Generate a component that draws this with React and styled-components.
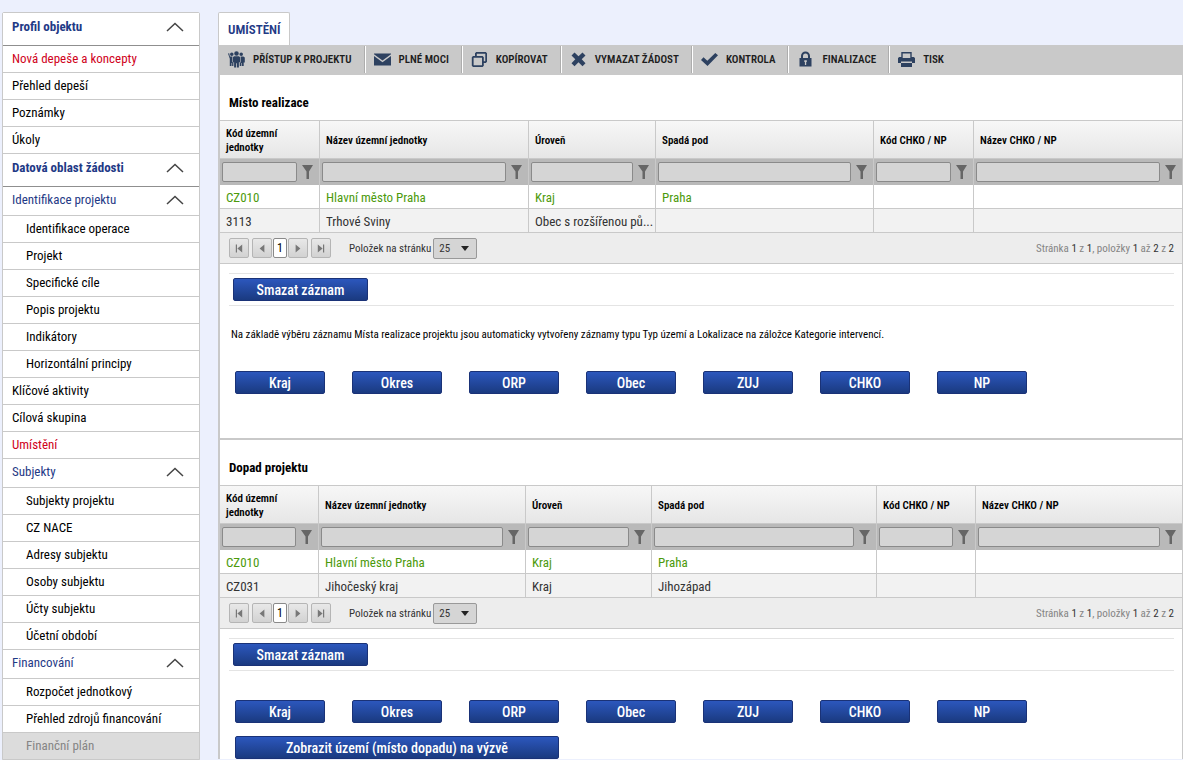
import React from 'react';
import styled, {createGlobalStyle, css} from 'styled-components';

const GlobalStyle = createGlobalStyle`
  * {
    box-sizing: border-box;
  }

  body {
    margin: 0;
    background: #ecf0fd;
    color: #000;
    font-family: 'Roboto Condensed', 'Liberation Sans Narrow', Roboto, sans-serif;
    font-size: 13px;
  }

  button, input, select {
    font-family: inherit;
  }
`;

const Page = styled.div`
  display: flex;
  align-items: flex-start;
  gap: 18px;
  padding: 12px 0 0 2px;
`;

const Sidebar = styled.nav`
  flex: 0 0 198px;
  border: 1px solid #c9c9c9;
  border-radius: 2px;
  background: #fff;
`;

const MenuHeading = styled.button`
  display: flex;
  align-items: center;
  justify-content: space-between;
  width: 100%;
  height: ${({$main}) => $main ? '33px' : '29px'};
  padding: ${({$main}) => $main ? '0 15px 5px 9px' : '0 15px 3px 9px'};
  border: 0;
  border-bottom: 1px solid ${({$main}) => $main ? '#8f8f8f' : '#c9c9c9'};
  background: #fff;
  color: #1f3a86;
  font-size: 13px;
  font-weight: ${({$main}) => $main ? 700 : 400};
  text-align: left;
  cursor: pointer;
`;

const MenuLink = styled.a`
  display: block;
  height: 27px;
  padding-left: ${({$nested}) => $nested ? '23px' : '9px'};
  border-bottom: 1px solid #c9c9c9;
  color: ${({$active}) => $active ? '#d0021b' : '#000'};
  line-height: 26px;
  text-decoration: none;

  ${({$disabled}) => $disabled && css`
    background: #dcdcdc;
    color: #858585;
  `}
`;

const Main = styled.main`
  flex: 1 1 auto;
  min-width: 0;
`;

const Tab = styled.a`
  display: inline-block;
  height: 33px;
  padding: 0 9px;
  border: 1px solid #c9c9c9;
  border-bottom: 0;
  border-radius: 2px 2px 0 0;
  background: #fff;
  color: #1f3a86;
  font-weight: 600;
  line-height: 34px;
  text-decoration: none;
  vertical-align: top;
`;

const Panel = styled.div`
  border: solid #c9c9c9;
  border-width: 0 1px 0 2px;
  background: #fff;
`;

const Toolbar = styled.div`
  display: flex;
  height: 30px;
  padding: 1px 0 2px;
  background: #c9c9c9;
`;

const ToolButton = styled.button`
  display: flex;
  align-items: center;
  gap: 8px;
  padding: 0 13px 0 8px;
  border: 0;
  background: none;
  color: #1d1d1d;
  font-size: 11px;
  font-weight: 600;
  text-transform: uppercase;
  white-space: nowrap;
  cursor: pointer;

  & + & {
    border-left: 1px solid #fff;
    box-shadow: -1px 0 0 #adadad;
  }

  svg {
    width: 17px;
    height: 17px;
    fill: #2d4160;
  }
`;

const Section = styled.section`
  & + & {
    border-top: 2px solid #c9c9c9;
  }
`;

const SectionTitle = styled.h2`
  height: 45px;
  margin: 0;
  padding: 10px 0 0 9px;
  font-size: 13px;
  font-weight: 700;
  line-height: 36px;
`;

const Grid = styled.table`
  width: 100%;
  border-top: 1px solid #c9c9c9;
  border-spacing: 0;
  table-layout: fixed;
`;

const HeadCell = styled.th`
  height: 38px;
  padding: 2px 40px 0 6px;
  border-right: 1px solid #c9c9c9;
  border-bottom: 1px solid #c9c9c9;
  background: linear-gradient(#f7f7f7, #e6e6e6);
  font-size: 11px;
  font-weight: 600;
  line-height: 14px;
  text-align: left;
  white-space: ${({$wrap}) => $wrap ? 'normal' : 'nowrap'};

  &:last-child {
    border-right: 0;
  }
`;

const FilterCell = styled.td`
  height: 26px;
  padding: 0 6px 0 2px;
  border-right: 1px solid #c9c9c9;
  background: #b9b9b9;

  &:last-child {
    border-right: 0;
  }
`;

const FilterBox = styled.div`
  display: flex;
  align-items: center;
  gap: 5px;
`;

const FilterInput = styled.input`
  flex: 1 1 auto;
  width: 0;
  height: 20px;
  padding: 0 4px;
  border: 1px solid #8a8a8a;
  border-radius: 2px;
  background: #d5d5d5;
`;

const FilterButton = styled.button`
  display: flex;
  padding: 0;
  border: 0;
  background: none;

  svg {
    width: 11px;
    height: 14px;
    fill: #666;
  }
`;

const Cell = styled.td`
  height: 24px;
  padding: 2px 0 0 6px;
  border-right: 1px solid #c9c9c9;
  border-bottom: 1px solid #c9c9c9;
  background: ${({$alt}) => $alt ? '#f2f2f2' : '#fff'};
  color: ${({$selected}) => $selected ? '#4c9a0c' : '#333'};
  white-space: nowrap;

  &:last-child {
    border-right: 0;
  }
`;

const Pager = styled.div`
  display: flex;
  align-items: center;
  height: 31px;
  padding: 0 8px 0 9px;
  border-bottom: 1px solid #c9c9c9;
  background: #ededed;
  color: #333;
  font-size: 11px;
`;

const PagerGroup = styled.div`
  display: flex;
  gap: 3px;
`;

const PagerButton = styled.button`
  display: flex;
  align-items: center;
  justify-content: center;
  width: 20px;
  height: 20px;
  padding: 0;
  border: 1px solid #b5b5b5;
  border-radius: 2px;
  background: linear-gradient(#e8e8e8, #d2d2d2);

  svg {
    width: 8px;
    height: 9px;
    fill: #777;
  }
`;

const PageNumber = styled.button`
  width: 14px;
  height: 20px;
  margin: 0 1px;
  padding: 0;
  border: 1px solid #8a8a8a;
  border-radius: 2px;
  background: #fff;
  font-size: 12px;
`;

const SizeLabel = styled.label`
  display: flex;
  align-items: center;
  gap: 2px;
  margin-left: 18px;
`;

const SizeBox = styled.span`
  position: relative;
  display: block;

  svg {
    position: absolute;
    top: 8px;
    right: 8px;
    width: 8px;
    height: 5px;
    fill: #222;
    pointer-events: none;
  }
`;

const SizeSelect = styled.select`
  display: block;
  width: 44px;
  height: 21px;
  padding: 0 5px;
  border: 1px solid #999;
  border-radius: 2px;
  background: #d5d5d5;
  color: #333;
  font-size: 11px;
  appearance: none;
`;

const PagerInfo = styled.span`
  margin-left: auto;
  color: #858585;

  b {
    color: #333;
    font-weight: 400;
  }
`;

const DeleteBar = styled.div`
  margin: 9px 8px 0 9px;
  padding: 4px;
  border: solid #e4e4e4;
  border-width: 1px 0;
`;

const Note = styled.p`
  margin: 0;
  padding: 20px 11px 0;
  font-size: 11px;
  line-height: 18px;
`;

const Buttons = styled.div`
  display: flex;
  flex-wrap: wrap;
  gap: 13px 27px;
  padding: ${({$tall}) => $tall ? '27px 15px 44px' : '29px 15px 0'};
`;

const Button = styled.button`
  display: block;
  width: ${({$width}) => $width || 90}px;
  height: 23px;
  padding: 0;
  border: 1px solid #1a3277;
  border-radius: 2px;
  background: linear-gradient(#2c57bd, #1a3a80);
  color: #fff;
  font-size: 14px;
  font-weight: 500;
  line-height: 20px;
  cursor: pointer;
`;

const Chevron = () => (
  <svg width="18" height="10" viewBox="0 0 18 10" fill="none" stroke="#444" strokeWidth="1.5">
    <path d="M1 9 9 1.5 17 9"/>
  </svg>
);

const icons = {
  people: <path d="M8.500 .2a2.300 2.300 0 0 1 0 4.600 2.300 2.300 0 0 1 0-4.600zM3.800 1.400a1.800 1.800 0 0 1 0 3.600 1.800 1.800 0 0 1 0-3.600zM13.200 1.400a1.800 1.800 0 0 1 0 3.600 1.800 1.800 0 0 1 0-3.600zM6 5.200h5l1 1v5h-1.100v5.300H8.900v-4.300h-.8v4.300H6.100v-5.300H5V6.200zM0 2.400l1.200-.2.700 3.200h2.500v5.800h1V15H4.100v-3h-.6v3H1.800V7.800zM12.600 5.400h2.800l1.400 1.200v4.900h-1.100V15H14v-3h-.6v3h-1.700v-3.400h.9z"/>,
  mail: <path d="M0 2.500h17v.7L8.500 9.500 0 3.200zM0 5l8.500 6.200L17 5v9.500H0z"/>,
  copy: <path fillRule="evenodd" d="M5.200 1h9.600l1.200 1.200v8.600L14.800 12h-2v2.800L11.600 16H2L.8 14.800V6.200L2 5h2V2.200zM5.800 2.700V5h5.800l1.200 1.200v4.100h1.500V2.700zM2.600 6.800v7.500H11V6.800z"/>,
  cross: <path d="m1.500 4.500 3-3 4 3.800 4-3.800 3 3-3.800 3.800 3.800 3.900-3 3-4-3.900-4 3.900-3-3 3.800-3.900z"/>,
  check: <path d="m0 9 2.500-2.700 3.800 3.500 8-7.800L17 4.300 6.500 15z"/>,
  lock: <path fillRule="evenodd" d="M4 7V5a4.500 4.500 0 0 1 9 0v2h1.500v8.500h-12V7zM6 7h5V5a2.500 2.500 0 0 0-5 0zM7.300 9.300v1.800h.6V14h1.300v-2.900h.6V9.300z"/>,
  print: <path fillRule="evenodd" d="M3.300 1h10.400v5h2l1.300 1v5h-3v4H3v-4H0V7l1.300-1h2zM4.700 2.400V7h7.600V2.400zM3 10.500V12h11v-1.500z"/>,
};

const menu = [
  {title: 'Profil objektu', main: true},
  {text: 'Nová depeše a koncepty', active: true},
  {text: 'Přehled depeší'},
  {text: 'Poznámky'},
  {text: 'Úkoly'},
  {title: 'Datová oblast žádosti', main: true},
  {title: 'Identifikace projektu'},
  {text: 'Identifikace operace', nested: true},
  {text: 'Projekt', nested: true},
  {text: 'Specifické cíle', nested: true},
  {text: 'Popis projektu', nested: true},
  {text: 'Indikátory', nested: true},
  {text: 'Horizontální principy', nested: true},
  {text: 'Klíčové aktivity'},
  {text: 'Cílová skupina'},
  {text: 'Umístění', active: true},
  {title: 'Subjekty'},
  {text: 'Subjekty projektu', nested: true},
  {text: 'CZ NACE', nested: true},
  {text: 'Adresy subjektu', nested: true},
  {text: 'Osoby subjektu', nested: true},
  {text: 'Účty subjektu', nested: true},
  {text: 'Účetní období', nested: true},
  {title: 'Financování'},
  {text: 'Rozpočet jednotkový', nested: true},
  {text: 'Přehled zdrojů financování', nested: true},
  {text: 'Finanční plán', nested: true, disabled: true},
];

const tools = [
  {icon: 'people', text: 'Přístup k projektu'},
  {icon: 'mail', text: 'Plné moci'},
  {icon: 'copy', text: 'Kopírovat'},
  {icon: 'cross', text: 'Vymazat žádost'},
  {icon: 'check', text: 'Kontrola'},
  {icon: 'lock', text: 'Finalizace'},
  {icon: 'print', text: 'Tisk'},
];

const columns = ['Kód územní jednotky', 'Název územní jednotky', 'Úroveň', 'Spadá pod', 'Kód CHKO / NP', 'Název CHKO / NP'];
const levels = ['Kraj', 'Okres', 'ORP', 'Obec', 'ZUJ', 'CHKO', 'NP'];

const places = [
  ['CZ010', 'Hlavní město Praha', 'Kraj', 'Praha', '', ''],
  ['3113', 'Trhové Sviny', 'Obec s rozšířenou pů...', '', '', ''],
];

const impacts = [
  ['CZ010', 'Hlavní město Praha', 'Kraj', 'Praha', '', ''],
  ['CZ031', 'Jihočeský kraj', 'Kraj', 'Jihozápad', '', ''],
];

const DataGrid = ({rows, widths, id}) => (
  <>
    <Grid>
      <colgroup>
        {columns.map((name, i) => <col key={name} width={widths[i]}/>)}
      </colgroup>
      <thead>
        <tr>
          {columns.map((name, i) => <HeadCell key={name} $wrap={i === 0}>{name}</HeadCell>)}
        </tr>
      </thead>
      <tbody>
        <tr>
          {columns.map((name) => (
            <FilterCell key={name}>
              <FilterBox>
                <FilterInput type="text" aria-label={name}/>
                <FilterButton aria-label={`Filtr: ${name}`}>
                  <svg viewBox="0 0 11 14"><path d="M0 0h11L7 6.500V14H4.500V6.500z"/></svg>
                </FilterButton>
              </FilterBox>
            </FilterCell>
          ))}
        </tr>
        {rows.map((row, r) => (
          <tr key={row[0]}>
            {row.map((text, i) => <Cell key={columns[i]} $selected={r === 0} $alt={r % 2 === 1}>{text}</Cell>)}
          </tr>
        ))}
      </tbody>
    </Grid>
    <Pager>
      <PagerGroup>
        <PagerButton aria-label="První"><svg viewBox="0 0 10 10"><path d="M1 0h1.500v10H1zM9 0v10L3 5z"/></svg></PagerButton>
        <PagerButton aria-label="Předchozí"><svg viewBox="0 0 10 10"><path d="M8 0v10L2 5z"/></svg></PagerButton>
      </PagerGroup>
      <PageNumber>1</PageNumber>
      <PagerGroup>
        <PagerButton aria-label="Další"><svg viewBox="0 0 10 10"><path d="M2 0v10l6-5z"/></svg></PagerButton>
        <PagerButton aria-label="Poslední"><svg viewBox="0 0 10 10"><path d="M1 0v10l6-5zM7.500 0H9v10H7.500z"/></svg></PagerButton>
      </PagerGroup>
      <SizeLabel htmlFor={id}>
        Položek na stránku
        <SizeBox>
          <SizeSelect id={id} defaultValue="25">
            <option>10</option>
            <option>25</option>
            <option>50</option>
          </SizeSelect>
          <svg viewBox="0 0 8 5"><path d="M0 0h8L4 5z"/></svg>
        </SizeBox>
      </SizeLabel>
      <PagerInfo>Stránka <b>1</b> z <b>1</b>, položky <b>1</b> až <b>2</b> z <b>2</b></PagerInfo>
    </Pager>
  </>
);

const App = () => (
  <>
    <GlobalStyle/>
    <Page>
      <Sidebar>
        {menu.map((item) => item.title
          ? <MenuHeading key={item.title} $main={item.main}>{item.title}<Chevron/></MenuHeading>
          : (
            <MenuLink key={item.text} href="#" $nested={item.nested} $active={item.active} $disabled={item.disabled}>
              {item.text}
            </MenuLink>
          ))}
      </Sidebar>
      <Main>
        <Tab href="#">UMÍSTĚNÍ</Tab>
        <Panel>
          <Toolbar>
            {tools.map(({icon, text}) => (
              <ToolButton key={icon}>
                <svg viewBox="0 0 17 17">{icons[icon]}</svg>
                {text}
              </ToolButton>
            ))}
          </Toolbar>
          <Section>
            <SectionTitle>Místo realizace</SectionTitle>
            <DataGrid id="places-size" rows={places} widths={[100, 209, 127, 218, 100]}/>
            <DeleteBar><Button $width={135}>Smazat záznam</Button></DeleteBar>
            <Note>
              Na základě výběru záznamu Místa realizace projektu jsou automaticky vytvořeny záznamy typu Typ území a Lokalizace na záložce Kategorie intervencí.
            </Note>
            <Buttons $tall>
              {levels.map((name) => <Button key={name}>{name}</Button>)}
            </Buttons>
          </Section>
          <Section>
            <SectionTitle>Dopad projektu</SectionTitle>
            <DataGrid id="impacts-size" rows={impacts} widths={[99, 207, 126, 225, 99]}/>
            <DeleteBar><Button $width={135}>Smazat záznam</Button></DeleteBar>
            <Buttons>
              {levels.map((name) => <Button key={name}>{name}</Button>)}
              <Button $width={324}>Zobrazit území (místo dopadu) na výzvě</Button>
            </Buttons>
          </Section>
        </Panel>
      </Main>
    </Page>
  </>
);

export default App;
